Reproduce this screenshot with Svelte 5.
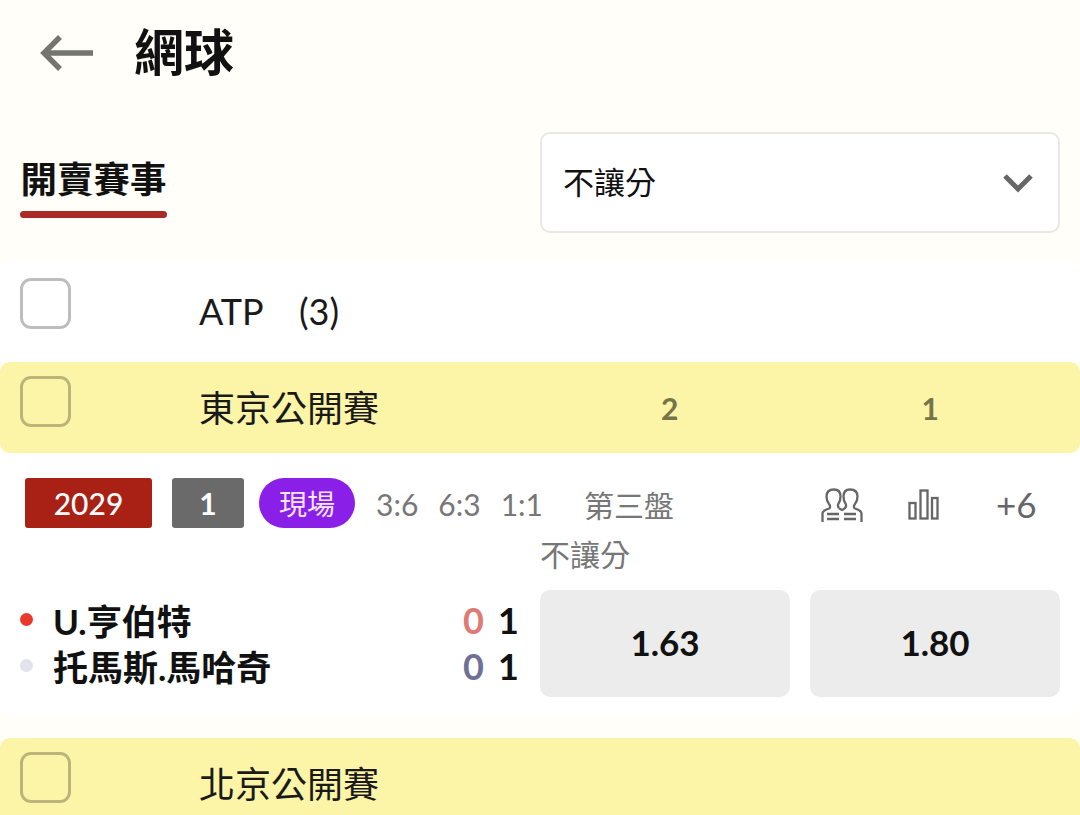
<script>
  const sets = ['3:6', '6:3', '1:1'];
  const players = [
    { name: 'U.亨伯特', dot: '#e8392b', game: '0', gameColor: '#e07a74', set: '1' },
    { name: '托馬斯.馬哈奇', dot: '#e2e3ea', game: '0', gameColor: '#6f7096', set: '1' }
  ];
</script>

<div class="page">
  <header class="top">
    <svg class="back" width="54" height="36" viewBox="0 0 54 36" fill="none" stroke="#757570" stroke-width="5.500">
      <path d="M4 18H53" />
      <path d="M20 2L4 18L20 34" />
    </svg>
    <h1>網球</h1>
  </header>

  <div class="filters">
    <div class="tab">
      開賣賽事
      <div class="tab-line"></div>
    </div>
    <div class="select">
      <span>不讓分</span>
      <svg width="30" height="20" viewBox="0 0 30 20" fill="none" stroke="#666" stroke-width="5">
        <path d="M2 3L15 16L28 3" />
      </svg>
    </div>
  </div>

  <section class="league">
    <div class="box"></div>
    <div class="league-name">ATP <span class="count">(3)</span></div>
  </section>

  <section class="band">
    <div class="box"></div>
    <div class="band-name">東京公開賽</div>
    <div class="col-a">2</div>
    <div class="col-b">1</div>
  </section>

  <section class="match">
    <div class="info">
      <span class="tag red">2029</span>
      <span class="tag grey">1</span>
      <span class="live">現場</span>
      <span class="sets">
        {#each sets as s}<span>{s}</span>{/each}
      </span>
      <span class="period">第三盤</span>
      <svg class="ico-people" width="42" height="34" viewBox="0 0 42 34" fill="none" stroke="#666" stroke-width="2.300">
        <path d="M1.500 34V25.500C1.500 23 4 22 8 20.500C9.500 19.800 9.500 18 8 16C6 13.500 5.500 11 5.500 8.500C5.500 4 8.500 1.500 13 1.500C17 1.500 19.500 4 19.500 8.500C19.500 11 19 13.500 17.500 15.500C16.500 17.500 17 19 18 20" />
        <path d="M40.500 34V25.500C40.500 23 38 22 34 20.500C32.500 19.800 32.500 18 34 16C36 13.500 36.500 11 36.500 8.500C36.500 4 33.500 1.500 29 1.500C25 1.500 22.500 4 22.500 8.500C22.500 11 23 13.500 24.500 15.500C25.500 17.500 25 19 24 20C22.500 21.500 21 22 21 22C21 22 19.500 21.500 18 20" />
        <path d="M6 26H18M6 31H18M23 26H35M23 31H35" />
      </svg>
      <svg class="ico-bars" width="32" height="31" viewBox="0 0 32 31" fill="none" stroke="#666" stroke-width="2.300">
        <rect x="1.500" y="14" width="6" height="15.500" />
        <rect x="12.500" y="1.500" width="7" height="28" />
        <rect x="24" y="9" width="5.500" height="20.500" />
      </svg>
      <span class="more">+6</span>
    </div>

    <div class="market-label">不讓分</div>

    <div class="rows">
      <div class="players">
        {#each players as p}
          <div class="player">
            <i class="dot" style="background: {p.dot}"></i>
            <span class="pname">{p.name}</span>
            <span class="game" style="color: {p.gameColor}">{p.game}</span>
            <span class="setnum">{p.set}</span>
          </div>
        {/each}
      </div>
      <button class="odd">1.63</button>
      <button class="odd">1.80</button>
    </div>
  </section>

  <section class="band last">
    <div class="box"></div>
    <div class="band-name">北京公開賽</div>
  </section>
</div>

<style>
  :global(body) {
    margin: 0;
    background: #fffef8;
  }

  .page {
    width: 1080px;
    height: 815px;
    overflow: hidden;
    font-family: Lato, "Noto Sans CJK TC", sans-serif;
    color: #111;
  }

  .top {
    height: 103px;
    display: flex;
    align-items: center;
    padding-left: 40px;
    box-sizing: border-box;
  }

  .back {
    margin: 3px 40px 0 0;
  }

  h1 {
    margin: 0;
    font-size: 50px;
    font-weight: 700;
    line-height: 1;
  }

  .filters {
    height: 157px;
    display: flex;
    align-items: flex-start;
    justify-content: space-between;
    padding: 29px 20px 0;
    box-sizing: border-box;
  }

  .tab {
    margin-top: 24px;
    width: 147px;
    font-size: 36.500px;
    font-weight: 700;
    line-height: 46px;
    text-align: center;
    white-space: nowrap;
  }

  .tab-line {
    height: 7px;
    margin-top: 9px;
    border-radius: 4px;
    background: #a92a27;
  }

  .select {
    width: 520px;
    height: 101px;
    box-sizing: border-box;
    display: flex;
    align-items: center;
    justify-content: space-between;
    padding: 0 25px 4px 21px;
    background: #fff;
    border: 2px solid #e8e8e4;
    border-radius: 10px;
    font-size: 31px;
  }

  .select svg {
    margin-top: 4px;
  }

  .league {
    height: 102px;
    background: #fff;
    display: flex;
    align-items: flex-start;
    padding: 18px 0 0 20px;
    box-sizing: border-box;
    border-radius: 10px 10px 0 0;
  }

  .box {
    width: 51px;
    height: 51px;
    box-sizing: border-box;
    border: 3px solid rgba(0, 0, 0, 0.26);
    border-radius: 11px;
    flex: none;
  }

  .league-name {
    margin: 11px 0 0 128px;
    font-size: 36px;
    line-height: 44px;
    color: #1a1a1a;
    white-space: nowrap;
  }

  .count {
    margin-left: 27px;
  }

  .band {
    height: 91px;
    background: #fcf4a6;
    border-radius: 10px;
    display: flex;
    align-items: flex-start;
    padding: 14px 0 0 20px;
    box-sizing: border-box;
  }

  .band-name {
    margin: 9px 0 0 128px;
    font-size: 36px;
    line-height: 46px;
    color: #1a1a1a;
    width: 180px;
    white-space: nowrap;
  }

  .col-a,
  .col-b {
    font-size: 30px;
    font-weight: 700;
    color: #76744a;
    line-height: 46px;
    margin-top: 9px;
  }

  .col-a {
    margin-left: 282px;
  }

  .col-b {
    margin-left: 243px;
  }

  .match {
    height: 263px;
    background: #fff;
    padding: 25px 20px 0;
    box-sizing: border-box;
    margin-bottom: 22px;
    border-radius: 0 0 10px 10px;
  }

  .info {
    display: flex;
    align-items: center;
    height: 50px;
    color: #777;
  }

  .tag {
    height: 50px;
    box-sizing: border-box;
    border-radius: 3px;
    color: #fff;
    display: flex;
    align-items: center;
    justify-content: center;
    font-size: 30px;
    font-weight: 500;
  }

  .red {
    width: 127px;
    margin-left: 5px;
    background: #a92115;
  }

  .grey {
    width: 72px;
    margin-left: 20px;
    background: #6a6a6a;
    font-weight: 700;
  }

  .live {
    width: 96px;
    height: 50px;
    margin-left: 15px;
    border-radius: 25px;
    background: #8a1fe8;
    color: #f4e6ff;
    font-size: 28px;
    display: flex;
    align-items: center;
    justify-content: center;
    box-sizing: border-box;
  }

  .sets {
    display: flex;
    gap: 20px;
    margin: 2px 0 0 21px;
    font-size: 30px;
    color: #777;
  }

  .period {
    margin: 2px 0 0 41px;
    font-size: 30px;
    width: 100px;
    white-space: nowrap;
  }

  .ico-people {
    margin: 4px 0 0 137px;
  }

  .ico-bars {
    margin: 2px 0 0 45px;
  }

  .more {
    margin: 2px 0 0 56px;
    font-size: 35px;
    color: #666;
  }

  .market-label {
    margin: 6px 0 0 520px;
    font-size: 30px;
    line-height: 40px;
    color: #777;
  }

  .rows {
    display: flex;
    align-items: center;
    margin-top: 16px;
  }

  .players {
    width: 520px;
    display: flex;
    flex-direction: column;
    padding-bottom: 2px;
  }

  .player {
    display: flex;
    align-items: center;
    height: 46px;
    font-size: 35px;
    font-weight: 700;
  }

  .dot {
    width: 13px;
    height: 13px;
    border-radius: 50%;
    margin-right: 20px;
    flex: none;
  }

  .pname {
    flex: 1;
    white-space: nowrap;
  }

  .game {
    width: 21px;
    margin-right: 14px;
    font-size: 36px;
  }

  .setnum {
    width: 20px;
    margin-right: 22px;
    font-size: 36px;
  }

  .odd {
    width: 250px;
    height: 107px;
    border: 0;
    border-radius: 10px;
    background: #ececec;
    font-family: inherit;
    font-size: 35px;
    font-weight: 700;
    color: #111;
    padding: 0 0 4px;
  }

  .odd + .odd {
    margin-left: 20px;
  }

  .last {
    height: 90px;
  }
</style>
